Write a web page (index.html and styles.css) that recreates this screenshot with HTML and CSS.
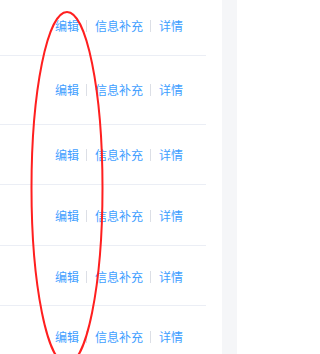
FILE: index.html
```html
<!DOCTYPE html>
<html lang="zh">
<head>
<meta charset="utf-8">
<link rel="stylesheet" href="styles.css">
</head>
<body>
<div class="page">
  <div class="table">
    <div class="row r1"><div class="ops"><a class="link">编辑</a><span class="divider"></span><a class="link">信息补充</a><span class="divider"></span><a class="link">详情</a></div></div>
    <div class="row r2"><div class="ops"><a class="link">编辑</a><span class="divider"></span><a class="link">信息补充</a><span class="divider"></span><a class="link">详情</a></div></div>
    <div class="row r3"><div class="ops"><a class="link">编辑</a><span class="divider"></span><a class="link">信息补充</a><span class="divider"></span><a class="link">详情</a></div></div>
    <div class="row r4"><div class="ops"><a class="link">编辑</a><span class="divider"></span><a class="link">信息补充</a><span class="divider"></span><a class="link">详情</a></div></div>
    <div class="row r5"><div class="ops"><a class="link">编辑</a><span class="divider"></span><a class="link">信息补充</a><span class="divider"></span><a class="link">详情</a></div></div>
    <div class="row r6"><div class="ops"><a class="link">编辑</a><span class="divider"></span><a class="link">信息补充</a><span class="divider"></span><a class="link">详情</a></div></div>
  </div>
  <div class="gutter"></div>
  <div class="side"></div>
  <svg class="mark" width="237" height="354" viewBox="0 0 237 354">
    <ellipse cx="67" cy="188" rx="35.5" ry="176" fill="none" stroke="#ff1f1f" stroke-width="2"/>
  </svg>
</div>
</body>
</html>
```
FILE: styles.css
```css
* { box-sizing: border-box; }
html, body { margin: 0; padding: 0; }
body {
  width: 237px;
  height: 354px;
  overflow: hidden;
  background: #ffffff;
  font-family: "Noto Sans CJK SC", "Noto Sans", sans-serif;
  font-size: 12px;
}
.page {
  position: relative;
  display: flex;
  width: 237px;
  height: 354px;
}
.table {
  width: 206px;
  display: flex;
  flex-direction: column;
}
.row {
  display: flex;
  align-items: center;
  justify-content: flex-end;
  padding-right: 23px;
  border-bottom: 1px solid #ebeef5;
  flex: none;
}
.r1 { height: 56px; padding-bottom: 3px; }
.r2 { height: 69px; }
.r3 { height: 60px; }
.r4 { height: 61px; padding-top: 2px; }
.r5 { height: 60px; padding-top: 2px; }
.r6 { height: 48px; border-bottom: none; padding-top: 14px; }
.ops {
  display: flex;
  align-items: center;
  line-height: 16px;
}
.link {
  color: #409eff;
  white-space: nowrap;
}
.divider {
  width: 1px;
  height: 12px;
  margin: 0 7.5px;
  background: #dcdfe6;
}
.gutter {
  width: 16px;
  background: #ffffff;
}
.side {
  flex: 1;
  background: #f5f6f8;
}
.mark {
  position: absolute;
  left: 0;
  top: 0;
  pointer-events: none;
}
```
